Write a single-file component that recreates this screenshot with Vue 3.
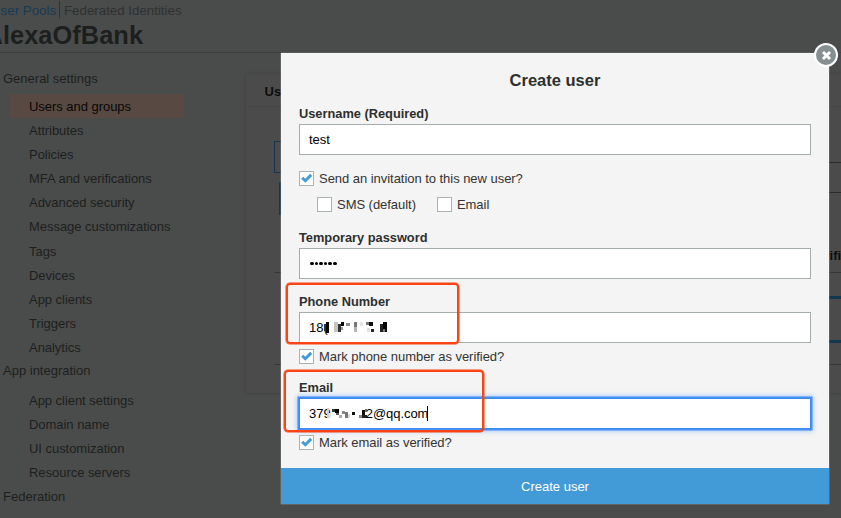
<script setup>
import { ref } from 'vue'

const generalItems = [
  'Users and groups', 'Attributes', 'Policies', 'MFA and verifications', 'Advanced security',
  'Message customizations', 'Tags', 'Devices', 'App clients', 'Triggers', 'Analytics'
]
const integrationItems = ['App client settings', 'Domain name', 'UI customization', 'Resource servers']
const active = ref('Users and groups')
const invite = ref(true)
const phoneVerified = ref(true)
const emailVerified = ref(true)

// [x, y, width, height, fill] blocks that hide part of a value
const phoneMask = [
  [3, 0, 3, 11, '#050505'], [1, 2, 2, 7, '#333'], [11, 0, 4, 10, '#c4c4c4'], [15, 2, 3, 8, '#333'],
  [18, 0, 3, 4, '#050505'], [18, 5, 2, 3, '#999'], [23, 1, 4, 3, '#8d8d8d'], [31, 0, 3, 5, '#777'],
  [31, 5, 3, 5, '#b5b5b5'], [37, 0, 3, 4, '#e2e2e2'], [43, 0, 3, 3, '#777'], [46, 0, 4, 4, '#111'],
  [44, 6, 3, 4, '#e1e1e1'], [48, 7, 3, 3, '#222'], [57, 2, 3, 8, '#222'], [60, 0, 4, 7, '#050505'],
  [60, 7, 2, 3, '#777'], [62, 7, 2, 3, '#111']
]
const emailMask = [
  [0, 0, 2, 10, '#ccc'], [2, 5, 2, 5, '#e6e6e6'], [5, 1, 3, 3, '#333'], [8, 1, 4, 4, '#050505'],
  [9, 5, 3, 2, '#555'], [12, 7, 3, 3, '#aaa'], [15, 3, 3, 3, '#888'], [18, 4, 3, 6, '#777'],
  [21, 6, 2, 4, '#ddd'], [25, 4, 3, 3, '#111'], [32, 7, 3, 3, '#888'], [35, 2, 3, 5, '#111'],
  [35, 7, 5, 3, '#222'], [38, 1, 2, 3, '#777']
]
</script>

<template>
  <div class="screen">
    <header class="top">
      <div class="crumbs"><span class="pools">User Pools</span><span class="identities">Federated Identities</span></div>
      <h1>AlexaOfBank</h1>
    </header>
    <div class="main">
      <nav>
        <div class="section">General settings</div>
        <ul>
          <li v-for="item in generalItems" :key="item" :class="{ active: item === active }">{{ item }}</li>
        </ul>
        <div class="section integration">App integration</div>
        <ul class="second">
          <li v-for="item in integrationItems" :key="item">{{ item }}</li>
        </ul>
        <div class="section">Federation</div>
      </nav>
      <section class="card">
        <div class="tab">Users</div>
        <div class="tools">
          <div class="buttons"><div class="btn"></div><div class="btn inset"></div></div>
          <div class="search"></div>
        </div>
        <div class="table">
          <div class="thead"><span>verified</span></div>
          <div class="tbody"><div class="notice"></div></div>
        </div>
      </section>
    </div>

    <div class="modal">
      <button class="close" aria-label="Close">
        <svg width="11" height="11" viewBox="0 0 11 11"><path d="M3 3L8 8M8 3L3 8" stroke="#fff" stroke-width="2.9" stroke-linecap="square" /></svg>
      </button>
      <form @submit.prevent>
        <h2>Create user</h2>
        <label class="name">Username (Required)</label>
        <div class="field">test</div>
        <div class="check invite" @click="invite = !invite">
          <i class="box"><svg v-if="invite" viewBox="0 0 13 13"><path d="M2.2 5.8L5.3 8.8L11.2 2.9" /></svg></i>
          <span>Send an invitation to this new user?</span>
        </div>
        <div class="choices">
          <div class="check"><i class="box"></i><span>SMS (default)</span></div>
          <div class="check"><i class="box"></i><span>Email</span></div>
        </div>
        <label class="name">Temporary password</label>
        <div class="field password"><b v-for="n in 6" :key="n"></b></div>
        <label class="name phone">Phone Number</label>
        <div class="field">
          <span class="lead">18(</span>
          <svg class="mask phone-mask" width="66" height="11"><rect v-for="(r, i) in phoneMask" :key="i" :x="r[0]" :y="r[1]" :width="r[2]" :height="r[3]" :fill="r[4]" /></svg>
        </div>
        <div class="check verify" @click="phoneVerified = !phoneVerified">
          <i class="box"><svg v-if="phoneVerified" viewBox="0 0 13 13"><path d="M2.2 5.8L5.3 8.8L11.2 2.9" /></svg></i>
          <span>Mark phone number as verified?</span>
        </div>
        <label class="name email">Email</label>
        <div class="field focus">
          <span>379</span>
          <svg class="mask email-mask" width="40" height="11"><rect v-for="(r, i) in emailMask" :key="i" :x="r[0]" :y="r[1]" :width="r[2]" :height="r[3]" :fill="r[4]" /></svg>
          <span class="tail">2@qq.com</span><i class="caret"></i>
        </div>
        <div class="check verify" @click="emailVerified = !emailVerified">
          <i class="box"><svg v-if="emailVerified" viewBox="0 0 13 13"><path d="M2.2 5.8L5.3 8.8L11.2 2.9" /></svg></i>
          <span>Mark email as verified?</span>
        </div>
      </form>
      <button class="submit">Create user</button>
    </div>
    <div class="mark mark-phone"></div>
    <div class="mark mark-email"></div>
  </div>
</template>

<style>
body { margin: 0; overflow: hidden; background: #4a4c4b; }
</style>

<style scoped>
* { box-sizing: border-box; }
.screen { position: relative; width: 841px; height: 518px; overflow: hidden; background: #4a4c4b; color: #1d1f1e; font: 13px/24px "Liberation Sans", Arial, sans-serif; }
.top { height: 53px; border-bottom: 1px solid #3e4040; }
.crumbs { display: flex; height: 19px; padding-top: 1px; margin-left: -9px; font-size: 13.3px; line-height: 19px; white-space: nowrap; }
.pools { width: 69px; height: 17px; color: #173a56; border-right: 1px solid #303231; }
.identities { padding-left: 4px; color: #2f3130; }
h1 { margin: 3px 0 0 -15.5px; font-size: 25.4px; line-height: 27px; letter-spacing: .05px; }
.main { display: flex; height: 465px; }
nav { width: 246px; padding-top: 13px; flex: none; }
.section { padding-left: 3px; line-height: 25px; height: 25px; }
.integration { margin-top: -1px; }
ul { list-style: none; margin: 0; padding: 3px 62px 0 10px; }
li { height: 24.1px; padding-left: 19px; line-height: 25.6px; letter-spacing: -.04px; white-space: nowrap; }
.active { background: #584a42; color: #080706; }
.second { padding-top: 5px; }
.card { flex: 1; height: 319px; margin-top: 21px; background: #4c4b4b; box-shadow: 0 0 3px #3d3f3e; overflow: hidden; }
.tab { height: 33px; padding: 3px 0 0 18.5px; border-bottom: 1px solid #464545; font-weight: bold; color: #0d0d0d; line-height: 30px; }
.tools { display: flex; height: 136px; padding: 34px 0 0 28px; }
.buttons { display: flex; flex-direction: column; gap: 9px; width: 300px; }
.btn { height: 32px; width: 120px; border: 1px solid #12374f; }
.inset { margin-left: 5px; height: 33px; background: #12374f; }
.search { flex: 1; height: 31px; margin-top: 21px; border: 1px solid #292a2a; border-right: 0; }
.table { margin-left: 28px; }
.thead { display: flex; justify-content: flex-end; height: 30px; border-bottom: 1px solid #363636; line-height: 25px; font-weight: bold; color: #0d0d0d; }
.thead span { width: 31px; }
.tbody { height: 92px; padding-top: 23px; border-bottom: 1px solid #363636; }
.notice { height: 47px; margin-left: 300px; border: solid #12374f; border-width: 3px 0; }

.modal { position: absolute; left: 281px; top: 53px; width: 548px; height: 451px; display: flex; flex-direction: column; background: #f4f4f4; color: #333; box-shadow: 0 0 1px #ddd; }
form { flex: 1; padding: 14px 18px 0; display: flex; flex-direction: column; }
h2 { margin: 0; height: 36px; line-height: 27px; font-size: 16.5px; text-align: center; color: #2d2f2f; }
.name { font-weight: bold; font-size: 12.8px; height: 21px; line-height: 22px; color: #2d2f2f; }
.field { position: relative; display: flex; align-items: center; height: 31px; flex: none; padding-left: 9px; background: #fff; border: 1px solid #a5adad; color: #000; }
.check { display: flex; align-items: center; gap: 5px; height: 16px; line-height: 16px; letter-spacing: -.04px; white-space: nowrap; }
.box { width: 15px; height: 15px; margin-bottom: 2px; border: 1px solid #aab3b3; background: #fff; flex: none; display: flex; }
.box svg { width: 13px; height: 13px; }
.box path { fill: none; stroke: #429ad7; stroke-width: 2.9; }
.invite { margin-top: 16px; }
.choices { display: flex; gap: 21px; margin: 10px 0 14px 18px; }
.phone { margin-top: 12px; height: 21px; }
.password { gap: 1px; padding-left: 10px; }
.password b { width: 3.6px; height: 3.6px; border-radius: 50%; background: #000; }
.lead { width: 20px; overflow: hidden; }
.mask { flex: none; }
.phone-mask { margin-left: -6px; }
.verify { margin-top: 6px; }
.email { margin-top: 12px; }
.focus { border: 1px solid #3b8bf0; box-shadow: 0 0 0 1.5px #4390f7, 0 0 5px 2px #9dc5fb; }
.email-mask { margin-left: -4px; }
.tail { margin-left: -1px; letter-spacing: -.05px; }
.caret { width: 1px; height: 15px; background: #000; margin-left: -1px; }
.submit { height: 36px; border: 0; padding: 2px 0 0; background: #429ad7; color: #fff; font: 13px/34px "Liberation Sans", Arial, sans-serif; }
.close { position: absolute; right: -9px; top: -10px; width: 24px; height: 24px; border: 2px solid #fff; border-radius: 50%; background: #879091; padding: 0; display: flex; align-items: center; justify-content: center; }
.mark { position: absolute; border: 2.5px solid #fa4416; border-radius: 4px; box-shadow: 0 0 0 .5px #fa4416; }
.mark-phone { left: 286px; top: 283px; width: 173px; height: 61px; }
.mark-email { left: 284px; top: 370px; width: 200px; height: 62px; }
</style>
